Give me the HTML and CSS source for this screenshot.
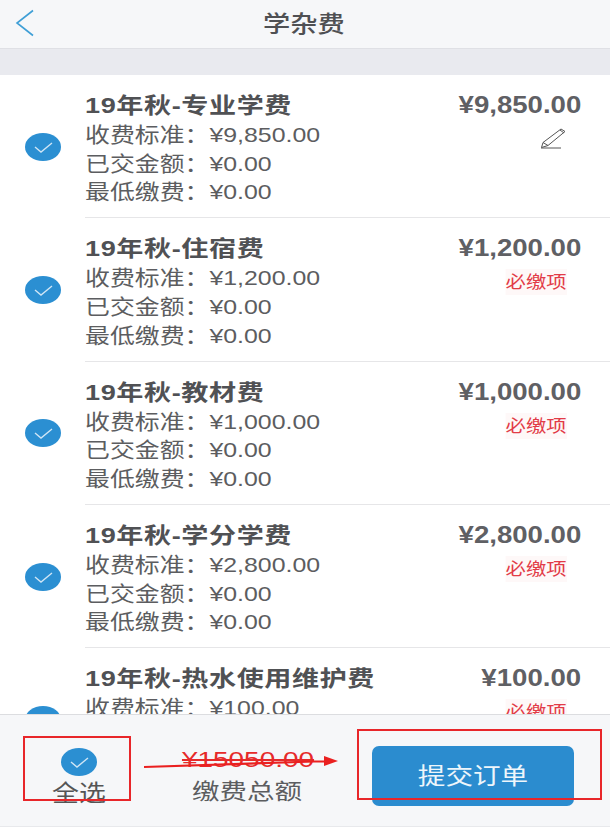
FILE: index.html
```html
<!DOCTYPE html>
<html lang="zh">
<head>
<meta charset="utf-8">
<title>学杂费</title>
<link rel="stylesheet" href="styles.css">
</head>
<body>
<div class="app">
  <header class="topbar">
    <svg class="back" width="20" height="28" viewBox="0 0 20 28"><path d="M18 1.500 2 14l16 12.500" fill="none" stroke="#3f9fd6" stroke-width="1.600"/></svg>
    <h1 class="wide">学杂费</h1>
  </header>
  <div class="band"></div>
  <main class="list">
    <section class="item">
      <svg class="check" viewBox="0 0 36 28"><ellipse cx="18" cy="14" rx="18" ry="14" fill="#2b8fd2"/><path d="M10 14l6 5 11-9" fill="none" stroke="#cfe5f5" stroke-width="1.400"/></svg>
      <div class="body">
        <div class="info">
          <h2 class="title">19年秋-专业学费</h2>
          <p class="wide">收费标准：¥9,850.00</p>
          <p class="wide">已交金额：¥0.00</p>
          <p class="wide">最低缴费：¥0.00</p>
        </div>
        <div class="side">
          <div class="amount">¥9,850.00</div>
          <svg class="pencil" width="26" height="21" viewBox="0 0 26 21"><path d="M1.500 19.500 3 14.500 21 1l4 2.500L8 17.500zM3 14.500l5 3M20 2l4 3M1 20h20" fill="none" stroke="#555" stroke-width="1"/></svg>
        </div>
      </div>
    </section>
    <section class="item">
      <svg class="check" viewBox="0 0 36 28"><ellipse cx="18" cy="14" rx="18" ry="14" fill="#2b8fd2"/><path d="M10 14l6 5 11-9" fill="none" stroke="#cfe5f5" stroke-width="1.400"/></svg>
      <div class="body">
        <div class="info">
          <h2 class="title">19年秋-住宿费</h2>
          <p class="wide">收费标准：¥1,200.00</p>
          <p class="wide">已交金额：¥0.00</p>
          <p class="wide">最低缴费：¥0.00</p>
        </div>
        <div class="side">
          <div class="amount">¥1,200.00</div>
          <div class="must">必缴项</div>
        </div>
      </div>
    </section>
    <section class="item">
      <svg class="check" viewBox="0 0 36 28"><ellipse cx="18" cy="14" rx="18" ry="14" fill="#2b8fd2"/><path d="M10 14l6 5 11-9" fill="none" stroke="#cfe5f5" stroke-width="1.400"/></svg>
      <div class="body">
        <div class="info">
          <h2 class="title">19年秋-教材费</h2>
          <p class="wide">收费标准：¥1,000.00</p>
          <p class="wide">已交金额：¥0.00</p>
          <p class="wide">最低缴费：¥0.00</p>
        </div>
        <div class="side">
          <div class="amount">¥1,000.00</div>
          <div class="must">必缴项</div>
        </div>
      </div>
    </section>
    <section class="item">
      <svg class="check" viewBox="0 0 36 28"><ellipse cx="18" cy="14" rx="18" ry="14" fill="#2b8fd2"/><path d="M10 14l6 5 11-9" fill="none" stroke="#cfe5f5" stroke-width="1.400"/></svg>
      <div class="body">
        <div class="info">
          <h2 class="title">19年秋-学分学费</h2>
          <p class="wide">收费标准：¥2,800.00</p>
          <p class="wide">已交金额：¥0.00</p>
          <p class="wide">最低缴费：¥0.00</p>
        </div>
        <div class="side">
          <div class="amount">¥2,800.00</div>
          <div class="must">必缴项</div>
        </div>
      </div>
    </section>
    <section class="item">
      <svg class="check" viewBox="0 0 36 28"><ellipse cx="18" cy="14" rx="18" ry="14" fill="#2b8fd2"/><path d="M10 14l6 5 11-9" fill="none" stroke="#cfe5f5" stroke-width="1.400"/></svg>
      <div class="body">
        <div class="info">
          <h2 class="title">19年秋-热水使用维护费</h2>
          <p class="wide">收费标准：¥100.00</p>
          <p class="wide">已交金额：¥0.00</p>
          <p class="wide">最低缴费：¥0.00</p>
        </div>
        <div class="side">
          <div class="amount">¥100.00</div>
          <div class="must">必缴项</div>
        </div>
      </div>
    </section>
  </main>
  <footer class="bottom">
    <div class="all">
      <svg class="check-all" viewBox="0 0 36 28"><ellipse cx="18" cy="14" rx="18" ry="14" fill="#2b8fd2"/><path d="M10 14l6 5 11-9" fill="none" stroke="#cfe5f5" stroke-width="1.400"/></svg>
      <span class="all-label">全选</span>
    </div>
    <div class="total">
      <div class="total-price">¥15050.00</div>
      <div class="total-label">缴费总额</div>
    </div>
    <button class="submit"><span>提交订单</span></button>
    <div class="mark mark-all"></div>
    <div class="mark mark-submit"></div>
    <svg class="arrow" width="196" height="18" viewBox="0 0 196 18"><path d="M0 12 170 6.500H184" fill="none" stroke="#ea2020" stroke-width="2.200"/><path d="M180 1 194 6 180 11z" fill="#ea2020"/></svg>
  </footer>
  <div class="tail"></div>
</div>
</body>
</html>
```

FILE: styles.css
```css
* { box-sizing: border-box; margin: 0; padding: 0; }
html, body { height: 100%; background: #fff; }
body {
  font-family: "Liberation Sans", "Noto Sans CJK SC", sans-serif;
  color: #555;
  overflow: hidden;
}
.app { height: 835px; display: flex; flex-direction: column; }
.wide { transform: scaleX(1.185); transform-origin: left center; white-space: nowrap; }

.topbar {
  height: 49px;
  flex: none;
  position: relative;
  display: flex;
  align-items: center;
  justify-content: center;
  padding-bottom: 5px;
  background: #f6f7f9;
  border-bottom: 1px solid #dfe0e5;
}
.back { position: absolute; left: 15px; top: 9px; }
.topbar h1 {
  font-size: 23px;
  font-weight: 500;
  color: #4f5053;
  width: 69px;
  margin-right: 15px;
}
.band { height: 26px; flex: none; background: #e9eaef; }

.list { flex: 1; min-height: 0; overflow: hidden; background: #fff; }
.item { height: 143.3px; display: flex; align-items: center; padding-left: 25px; }
.check { width: 36px; height: 28px; flex: none; margin-right: 24px; }
.body {
  flex: 1;
  align-self: stretch;
  display: flex;
  justify-content: space-between;
  padding: 15px 29px 0 0;
  border-bottom: 1.500px solid #e6e6e8;
}
.title {
  font-size: 22px;
  line-height: 31px;
  font-weight: 700;
  letter-spacing: 0.500px;
  color: #505154;
  white-space: nowrap;
  transform: scaleX(1.23);
  transform-origin: left center;
}
.info p { font-size: 21px; line-height: 28.700px; color: #5c5d60; }
.side { display: flex; flex-direction: column; align-items: flex-end; }
.amount {
  font-size: 23px;
  line-height: 30px;
  font-weight: 700;
  color: #5f6064;
  transform: scaleX(1.2);
  transform-origin: right center;
}
.pencil { margin: 8px 15px 0 0; }
.must {
  margin: 6px 15px 0 0;
  font-size: 16.500px;
  line-height: 26px;
  color: #e23b47;
  background: #fef8f8;
  transform: scaleX(1.23);
  transform-origin: right center;
}

.bottom {
  height: 113px;
  flex: none;
  position: relative;
  display: flex;
  background: #f6f7f9;
  border-top: 1px solid #dcdde0;
  border-bottom: 1px solid #e8e9ec;
}
.all { width: 158px; display: flex; flex-direction: column; align-items: center; padding-top: 33px; }
.check-all { width: 36px; height: 28px; flex: none; }
.all-label {
  font-size: 23px;
  line-height: 30px;
  margin-top: 2px;
  color: #555;
  transform: scaleX(1.17);
}
.total { width: 179px; flex: none; display: flex; flex-direction: column; align-items: center; padding-top: 30px; }
.total-price {
  font-size: 22px;
  line-height: 30px;
  color: #e62a2a;
  text-decoration: line-through;
  transform: scaleX(1.27);
}
.total-label { font-size: 22px; line-height: 30px; margin-top: 2px; color: #5c5d60; transform: scaleX(1.25); }
.submit {
  width: 202px;
  height: 60px;
  margin: 31px 0 0 35px;
  flex: none;
  border: 0;
  border-radius: 7px;
  background: #2b8ccf;
  color: #eef6fb;
  padding-bottom: 4px;
  font: 400 23px "Liberation Sans", "Noto Sans CJK SC", sans-serif;
}
.submit span { display: inline-block; transform: scaleX(1.2); }
.mark { position: absolute; border: 2px solid #e8262a; }
.mark-all { left: 23px; top: 21px; width: 108px; height: 65px; }
.mark-submit { left: 357px; top: 14px; width: 245px; height: 71px; }
.arrow { position: absolute; left: 144px; top: 40px; }
.tail { height: 8px; flex: none; background: #fff; }
```
